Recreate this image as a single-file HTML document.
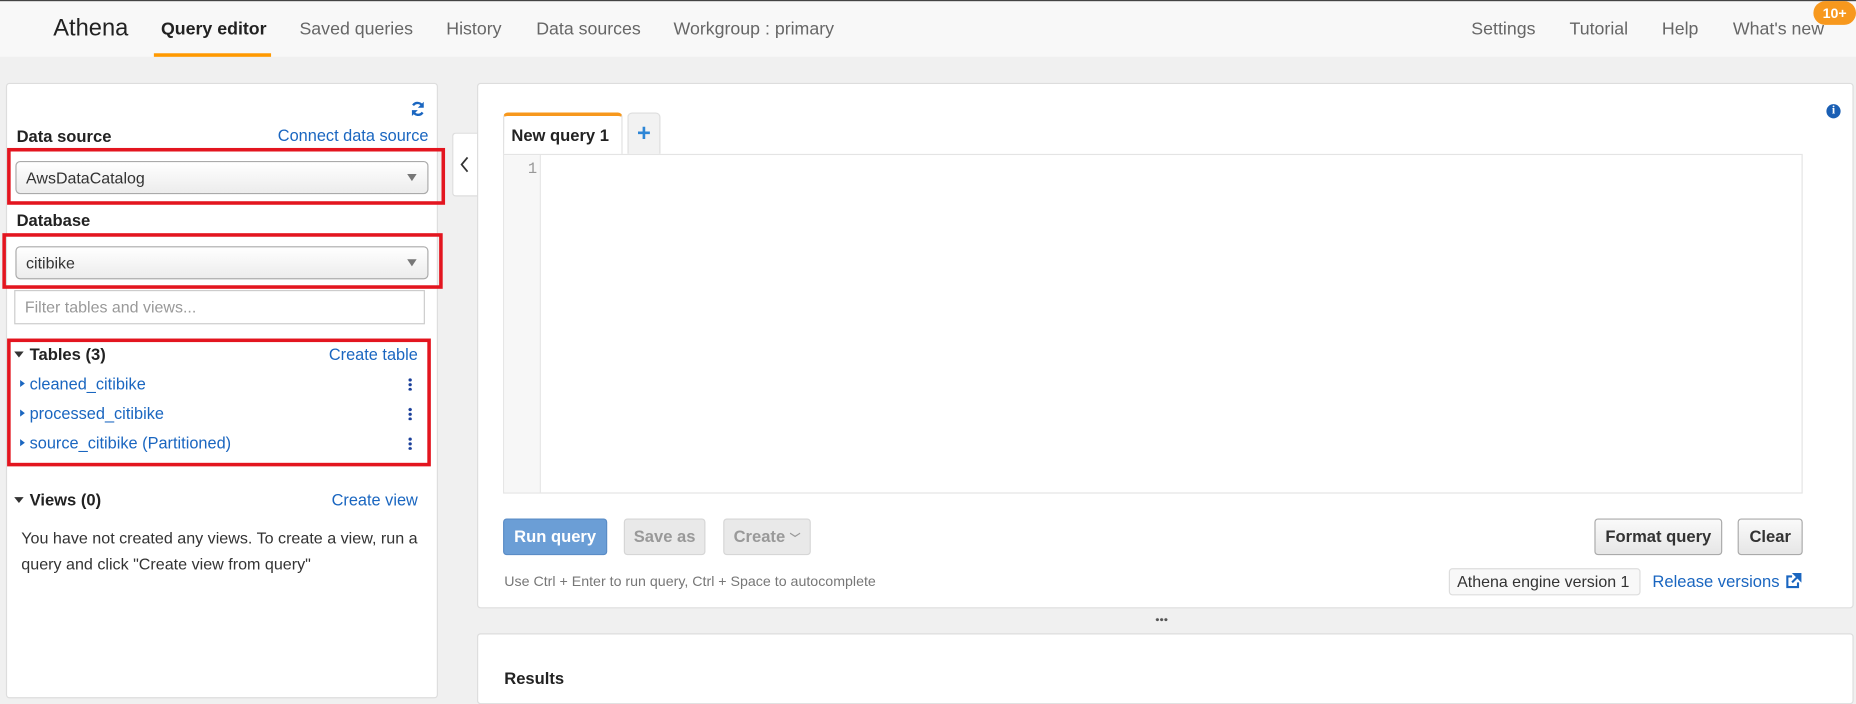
<!DOCTYPE html>
<html><head><meta charset="utf-8"><style>
*{box-sizing:border-box;margin:0;padding:0}
html,body{width:1856px;height:694px;overflow:hidden;background:#f0f0f0}
#s{position:absolute;left:0;top:0;width:1568px;height:587px;transform:scale(1.18367);transform-origin:0 0;font-family:"Liberation Sans",Arial,sans-serif;color:#333}
.a{position:absolute;white-space:nowrap}
.top{left:0;top:0;width:1568px;height:48px;background:#f8f8f8;border-top:1px solid #444}
.nav{font-size:15px;color:#666;top:16px}
.lnk{color:#1a66c0}
.panel{background:#fff;border:1px solid #ddd;border-radius:3px}
.red{border:3px solid #e3151f}
.sel{border:1px solid #aaa;border-radius:4px;background:linear-gradient(#fff,#ececec);font-size:13.5px;padding:6px 8px;color:#333}
.sel:after{content:"";position:absolute;right:9px;top:10px;border:4px solid transparent;border-top:6px solid #777}
.bold{font-weight:bold;font-size:14px;color:#222}
.tri{border:4px solid transparent;border-top:5px solid #333;width:0;height:0}
.rt{border:3.5px solid transparent;border-left:4px solid #1a66c0;width:0;height:0}
.keb{width:3px;height:11px;background:radial-gradient(circle,#1a3f9a 1.3px,transparent 1.5px) 0 0/3px 4px repeat-y}
.btn{border:1px solid #aaa;border-radius:3px;background:linear-gradient(#fafafa,#e6e6e6);font-weight:bold;font-size:14px;text-align:center;line-height:28px;color:#333}
</style></head><body><div id="s">
<div class="a top"></div>
<div class="a" style="left:45px;top:13px;font-size:20px;color:#222">Athena</div>
<div class="a nav" style="left:136px;color:#222;font-weight:bold">Query editor</div>
<div class="a" style="left:130px;top:45px;width:99px;height:3px;background:#f90"></div>
<div class="a nav" style="left:253px">Saved queries</div>
<div class="a nav" style="left:377px">History</div>
<div class="a nav" style="left:453px">Data sources</div>
<div class="a nav" style="left:569px">Workgroup : primary</div>
<div class="a nav" style="left:1243px">Settings</div>
<div class="a nav" style="left:1326px">Tutorial</div>
<div class="a nav" style="left:1404px">Help</div>
<div class="a nav" style="left:1464px">What's new</div>
<div class="a" style="left:1532px;top:1px;width:36px;height:20px;border-radius:10px;background:#f7981d;color:#fff;font-weight:bold;font-size:12px;text-align:center;line-height:20px">10+</div>

<div class="a panel" style="left:5px;top:70px;width:365px;height:520px"></div>
<svg class="a" style="left:347px;top:85px" width="12" height="14" viewBox="0 0 12 14"><path d="M10 5A4.5 4.5 0 0 0 2 4M2 9a4.5 4.5 0 0 0 8 1" stroke="#1a66c0" stroke-width="2" fill="none"/><path d="M11 1v5H6zM1 13V8h5z" fill="#1a66c0"/></svg>
<div class="a bold" style="left:14px;top:107px">Data source</div>
<div class="a lnk" style="right:1206px;top:107px;font-size:13.8px">Connect data source</div>
<div class="a red" style="left:6px;top:125px;width:370px;height:48px"></div>
<div class="a sel" style="left:13px;top:136px;width:349px;height:28px">AwsDataCatalog</div>
<div class="a bold" style="left:14px;top:178px">Database</div>
<div class="a red" style="left:2px;top:197px;width:372px;height:47px"></div>
<div class="a sel" style="left:13px;top:208px;width:349px;height:28px">citibike</div>
<div class="a" style="left:12px;top:245px;width:347px;height:29px;border:1px solid #ccc;font-size:13.5px;color:#999;padding:6px 8px">Filter tables and views...</div>
<div class="a red" style="left:6px;top:286px;width:358px;height:108px"></div>
<div class="a tri" style="left:12px;top:297px"></div>
<div class="a bold" style="left:25px;top:291px">Tables (3)</div>
<div class="a lnk" style="right:1215px;top:292px;font-size:13.8px">Create table</div>
<div class="a rt" style="left:17px;top:321px"></div><div class="a lnk" style="left:25px;top:317px;font-size:13.8px">cleaned_citibike</div><div class="a keb" style="left:345px;top:319px"></div>
<div class="a rt" style="left:17px;top:346px"></div><div class="a lnk" style="left:25px;top:342px;font-size:13.8px">processed_citibike</div><div class="a keb" style="left:345px;top:344px"></div>
<div class="a rt" style="left:17px;top:371px"></div><div class="a lnk" style="left:25px;top:367px;font-size:13.8px">source_citibike (Partitioned)</div><div class="a keb" style="left:345px;top:369px"></div>
<div class="a tri" style="left:12px;top:420px"></div>
<div class="a bold" style="left:25px;top:414px">Views (0)</div>
<div class="a lnk" style="right:1215px;top:415px;font-size:13.8px">Create view</div>
<div class="a" style="left:18px;top:444px;font-size:13.6px;line-height:22px;color:#333;white-space:normal;width:345px">You have not created any views. To create a view, run a query and click "Create view from query"</div>

<div class="a" style="left:382px;top:112px;width:23px;height:54px;background:#fff;border:1px solid #ddd;border-right:none;border-radius:3px 0 0 3px"></div>
<svg class="a" style="left:389px;top:132px" width="8" height="14"><path d="M6 1L1 7l5 6" stroke="#333" stroke-width="1.5" fill="none"/></svg>

<div class="a panel" style="left:403px;top:70px;width:1163px;height:444px"></div>
<div class="a" style="left:1543px;top:88px;width:12px;height:12px;border-radius:50%;background:#1a5fb4;color:#fff;font-size:10px;font-weight:bold;text-align:center;line-height:12px;font-family:'Liberation Serif',serif">i</div>
<div class="a" style="left:425px;top:95px;width:101px;height:36px;border:1px solid #ddd;border-top:3px solid #f7981d;border-bottom:none;border-radius:4px 4px 0 0;background:#fff;font-weight:bold;font-size:14px;padding:8px 6px;color:#222">New query 1</div>
<div class="a" style="left:530px;top:95px;width:28px;height:35px;border:1px solid #ddd;border-bottom:none;border-radius:4px 4px 0 0;background:#f2f2f2;color:#2e86d6;font-weight:bold;font-size:20px;text-align:center;line-height:34px">+</div>
<div class="a" style="left:425px;top:130px;width:1098px;height:287px;border:1px solid #e4e4e4;background:#fff"></div>
<div class="a" style="left:426px;top:131px;width:31px;height:285px;background:#f7f7f7;border-right:1px solid #e6e6e6"></div>
<div class="a" style="left:446px;top:135px;font-size:13px;color:#999;font-family:'Liberation Mono',monospace">1</div>

<div class="a btn" style="left:425px;top:438px;width:88px;height:31px;background:#6b9ed6;border-color:#5a8cc6;color:#fff">Run query</div>
<div class="a btn" style="left:527px;top:438px;width:69px;height:31px;background:#e9e9e9;border-color:#d6d6d6;color:#999">Save as</div>
<div class="a btn" style="left:611px;top:438px;width:74px;height:31px;background:#e9e9e9;border-color:#d6d6d6;color:#999">Create <span style="font-size:9px">﹀</span></div>
<div class="a btn" style="left:1347px;top:438px;width:108px;height:31px">Format query</div>
<div class="a btn" style="left:1468px;top:438px;width:55px;height:31px">Clear</div>
<div class="a" style="left:426px;top:484px;font-size:12px;color:#777">Use Ctrl + Enter to run query, Ctrl + Space to autocomplete</div>
<div class="a" style="left:1224px;top:480px;width:162px;height:23px;border:1px solid #ddd;border-radius:3px;background:#f8f8f8;font-size:13.5px;color:#333;padding:3px 0 0 6px">Athena engine version 1</div>
<div class="a lnk" style="left:1396px;top:483px;font-size:14px">Release versions</div>
<svg class="a" style="left:1508px;top:484px" width="14" height="14"><path d="M6 3H2v9h9V8" stroke="#1a66c0" stroke-width="1.8" fill="none"/><path d="M8 1h5v5zM12 2L6 8" stroke="#1a66c0" stroke-width="1.8" fill="#1a66c0"/></svg>
<div class="a" style="left:976px;top:522px;width:11px;height:3px;background:radial-gradient(circle,#555 1.2px,transparent 1.4px) 0 0/3.6px 3px repeat-x"></div>
<div class="a panel" style="left:403px;top:535px;width:1163px;height:60px"></div>
<div class="a bold" style="left:426px;top:565px">Results</div>
</div></body></html>
